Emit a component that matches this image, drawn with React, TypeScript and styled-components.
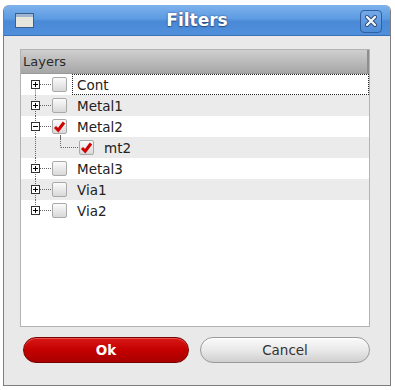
import React from 'react';
import styled, { createGlobalStyle } from 'styled-components';

const GlobalStyle = createGlobalStyle`
    html, body {
        margin: 0;
        padding: 0;
        background: #ffffff;
        font-family: "DejaVu Sans", "Liberation Sans", sans-serif;
    }
`

const Window = styled.div`
    width: 388px;
    height: 381px;
    margin: 5px 0 0 3px;
    display: flex;
    flex-direction: column;
    box-sizing: border-box;
    border-radius: 6px 6px 0 0;
    overflow: hidden;
    background: #e9e9e9;
    border: 1px solid #7d7d7d;
    border-top: none;
`

const TitleBar = styled.div`
    height: 31px;
    flex-shrink: 0;
    display: flex;
    align-items: center;
    justify-content: space-between;
    padding: 0 8px 0 11px;
    box-sizing: border-box;
    background: linear-gradient(#7eb2ec 0%, #5d9be2 45%, #4a89d6 55%, #4f8fdc 100%);
    border-bottom: 1px solid #3b6fb3;
`

const Title = styled.span`
    color: #ffffff;
    font-weight: bold;
    font-size: 17px;
    text-shadow: 0 1px 1px #2a4f82, 0 0 2px #2a4f82;
`

const CloseButton = styled.div`
    width: 22px;
    height: 23px;
    box-sizing: border-box;
    border: 1px solid #2f5f9e;
    border-radius: 4px;
    background: linear-gradient(#74a9e8, #4f8cd8);
    display: flex;
    align-items: center;
    justify-content: center;
    margin-top: 2px;
`

const Body = styled.div`
    flex: 1;
    display: flex;
    flex-direction: column;
    padding: 13px 0 0 16px;
`

const Panel = styled.div`
    width: 350px;
    height: 278px;
    box-sizing: border-box;
    background: #ffffff;
    border: 1px solid #b3b3b3;
    display: flex;
    flex-direction: column;
`

const Header = styled.div`
    height: 24px;
    flex-shrink: 0;
    box-sizing: border-box;
    padding-left: 2px;
    display: flex;
    align-items: center;
    font-size: 13px;
    color: #2b2b2b;
    background: linear-gradient(#cfcfcf, #a6a6a6);
    border-bottom: 1px solid #9a9a9a;
    border-right: 2px solid #8e8e8e;
`

const Row = styled.div<{ $shaded: boolean }>`
    height: 21px;
    display: flex;
    align-items: center;
    background: ${p => (p.$shaded ? '#ebebeb' : '#ffffff')};
`

const Check = styled.div<{ $tail: boolean }>`
    position: relative;
    width: 15px;
    height: 15px;
    flex-shrink: 0;
    box-sizing: border-box;
    border: 1px solid #a9a9a9;
    border-radius: 2px;
    background: linear-gradient(#fbfbfb, #d8d8d8);
    display: flex;
    align-items: center;
    justify-content: center;

    &::after {
        content: '';
        display: ${p => (p.$tail ? 'block' : 'none')};
        position: absolute;
        left: 7px;
        top: 15px;
        height: 4px;
        border-left: 1px dotted #666;
    }
`

const Label = styled.div<{ $focused: boolean }>`
    flex: 1;
    height: 21px;
    box-sizing: border-box;
    margin-left: 5px;
    padding-left: 4px;
    display: flex;
    align-items: center;
    font-size: 13.5px;
    color: #222;
    border: 1px dotted ${p => (p.$focused ? '#222' : 'transparent')};
`

const ButtonRow = styled.div`
    display: flex;
    gap: 11px;
    margin-top: 10px;
    padding-left: 3px;
`

const Button = styled.button<{ $primary?: boolean; $width: number }>`
    width: ${p => p.$width}px;
    height: 26px;
    border-radius: 13px;
    font-family: "DejaVu Sans", "Liberation Sans", sans-serif;
    font-size: 13.5px;
    padding: 0;
    cursor: pointer;
    font-weight: ${p => (p.$primary ? 'bold' : 'normal')};
    color: ${p => (p.$primary ? '#ffffff' : '#333333')};
    border: 1px solid ${p => (p.$primary ? '#7a0000' : '#9a9a9a')};
    background: ${p => (p.$primary
        ? 'linear-gradient(#d81818 0%, #c40000 50%, #a80000 100%)'
        : 'linear-gradient(#fafafa 0%, #e9e9e9 50%, #cfcfcf 100%)')};
    box-shadow: inset 0 1px 0 ${p => (p.$primary ? '#e85050' : '#ffffff')};
`

type Layer = {
    name: string;
    level: number;
    expander?: 'plus' | 'minus';
    checked: boolean;
    first?: boolean;
    last?: boolean;
    hasChild?: boolean;
}

const layers: Layer[] = [
    { name: 'Cont', level: 0, expander: 'plus', checked: false, first: true },
    { name: 'Metal1', level: 0, expander: 'plus', checked: false },
    { name: 'Metal2', level: 0, expander: 'minus', checked: true, hasChild: true },
    { name: 'mt2', level: 1, checked: true },
    { name: 'Metal3', level: 0, expander: 'plus', checked: false },
    { name: 'Via1', level: 0, expander: 'plus', checked: false },
    { name: 'Via2', level: 0, expander: 'plus', checked: false, last: true },
]

const dot = { stroke: '#666', strokeWidth: 1, strokeDasharray: '1 1' };

const TreeLines = ({ layer }: { layer: Layer }) => {
    const width = layer.level === 0 ? 31 : 58;
    const top = layer.first ? 10.5 : 0;
    const bottom = layer.last ? 10.5 : 21;
    return (
        <svg width={width} height={21} style={{ flexShrink: 0 }}>
            <line x1={14.5} y1={top} x2={14.5} y2={bottom} {...dot} />
            {layer.level === 0 ? (
                <>
                    <line x1={19} y1={10.5} x2={30} y2={10.5} {...dot} />
                    <rect x={10.5} y={6.5} width={8} height={8} fill="#fff" stroke="#333" />
                    <line x1={12} y1={10.5} x2={17} y2={10.5} stroke="#000" />
                    {layer.expander === 'plus' && (
                        <line x1={14.5} y1={8} x2={14.5} y2={13} stroke="#000" />
                    )}
                </>
            ) : (
                <>
                    <line x1={39.5} y1={0} x2={39.5} y2={10.5} {...dot} />
                    <line x1={40} y1={10.5} x2={57} y2={10.5} {...dot} />
                </>
            )}
        </svg>
    );
}

const Tick = () => (
    <svg width="13" height="13" viewBox="0 0 13 13">
        <path d="M2 7 L5.2 10.2 L11 2.5" fill="none" stroke="#d10000" strokeWidth="3" strokeLinejoin="miter" />
    </svg>
)

const App: React.FC<any> = () => {
    return (
        <>
            <GlobalStyle />
            <Window>
                <TitleBar>
                    <svg width="19" height="15" viewBox="0 0 19 15">
                        <rect x="0.5" y="0.5" width="18" height="14" fill="#e6e6dc" stroke="#3f5f8a" />
                        <rect x="1" y="1" width="17" height="3" fill="#9fb6d2" />
                    </svg>
                    <Title>Filters</Title>
                    <CloseButton>
                        <svg width="14" height="14" viewBox="0 0 14 14">
                            <path d="M3 3 L11 11 M11 3 L3 11" stroke="#27456e" strokeWidth="4" strokeLinecap="round" />
                            <path d="M3 3 L11 11 M11 3 L3 11" stroke="#f2f6fb" strokeWidth="2.4" strokeLinecap="round" />
                        </svg>
                    </CloseButton>
                </TitleBar>
                <Body>
                    <Panel>
                        <Header>Layers</Header>
                        {layers.map((layer, i) => (
                            <Row key={layer.name} $shaded={i % 2 === 1}>
                                <TreeLines layer={layer} />
                                <Check $tail={!!layer.hasChild}>
                                    {layer.checked && <Tick />}
                                </Check>
                                <Label $focused={i === 0}>{layer.name}</Label>
                            </Row>
                        ))}
                    </Panel>
                    <ButtonRow>
                        <Button $primary $width={166}>Ok</Button>
                        <Button $width={170}>Cancel</Button>
                    </ButtonRow>
                </Body>
            </Window>
        </>
    );
};

export default App;
